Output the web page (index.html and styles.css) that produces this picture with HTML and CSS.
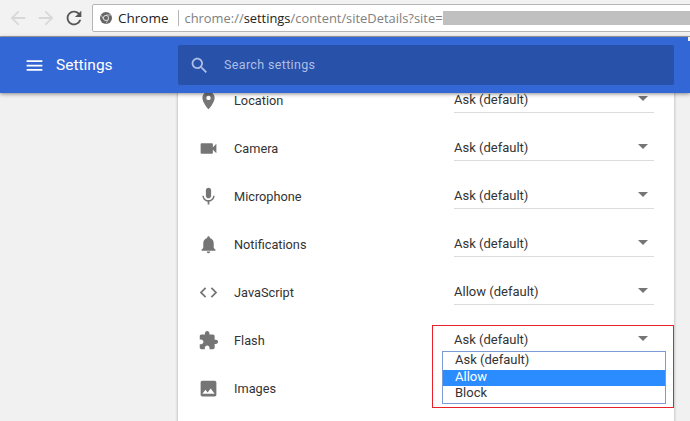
FILE: index.html
```html
<!DOCTYPE html>
<html lang="en">
<head>
<meta charset="utf-8">
<title>Settings</title>
<link rel="stylesheet" href="styles.css">
</head>
<body>
<div class="toolbar">
  <svg class="nav nav-off" viewBox="0 0 24 24"><path d="M20 11H7.83l5.59-5.59L12 4l-8 8 8 8 1.41-1.41L7.83 13H20v-2z"/></svg>
  <svg class="nav nav-off" viewBox="0 0 24 24"><path d="M12 4l-1.41 1.41L16.17 11H4v2h12.17l-5.58 5.59L12 20l8-8z"/></svg>
  <svg class="nav nav-on" viewBox="0 0 24 24"><path d="M17.65 6.35C16.2 4.9 14.21 4 12 4c-4.42 0-7.99 3.58-7.99 8s3.57 8 7.99 8c3.73 0 6.84-2.55 7.73-6h-2.08c-.82 2.33-3.04 4-5.65 4-3.31 0-6-2.69-6-6s2.69-6 6-6c1.66 0 3.14.69 4.22 1.78L13 11h7V4l-2.35 2.35z"/></svg>
  <div class="omnibox">
    <svg class="chrome-logo" viewBox="0 0 12 12"><circle cx="6" cy="6" r="6" fill="#666"/><circle cx="6" cy="6" r="2.6" fill="#666" stroke="#ddd" stroke-width="1"/><path d="M6 3h5M3.6 7.4L1.2 3.2M8.4 7.4L6 11.6" stroke="#ddd" stroke-width=".7" fill="none"/></svg>
    <span class="origin">Chrome</span>
    <span class="divider"></span>
    <span class="url"><span class="url-dim">chrome://</span><span class="url-strong">settings</span><span class="url-dim">/content/siteDetails?site=</span></span>
    <span class="redacted"></span>
  </div>
</div>
<header class="app-header">
  <div class="brand">
    <svg class="menu-icon" viewBox="0 0 24 24"><path d="M3 18h18v-2H3v2zm0-5h18v-2H3v2zm0-7v2h18V6H3z"/></svg>
    <span class="brand-title">Settings</span>
  </div>
  <div class="search">
    <svg class="search-icon" viewBox="0 0 24 24"><path d="M15.5 14h-.79l-.28-.27C15.41 12.59 16 11.11 16 9.5 16 5.91 13.09 3 9.5 3S3 5.91 3 9.5 5.91 16 9.5 16c1.61 0 3.09-.59 4.23-1.57l.27.28v.79l5 4.99L20.49 19l-4.99-5zm-6 0C7.01 14 5 11.99 5 9.5S7.01 5 9.5 5 14 7.01 14 9.5 11.99 14 9.5 14z"/></svg>
    <span class="search-text">Search settings</span>
  </div>
</header>
<main class="page">
  <section class="card">
    <div class="row">
      <svg class="row-icon" viewBox="0 0 24 24"><path d="M12 2C8.13 2 5 5.13 5 9c0 5.25 7 13 7 13s7-7.75 7-13c0-3.87-3.13-7-7-7zm0 9.5a2.5 2.5 0 0 1 0-5 2.5 2.5 0 0 1 0 5z"/></svg>
      <span class="row-label">Location</span>
      <div class="select"><span>Ask (default)</span><i class="caret"></i></div>
    </div>
    <div class="row">
      <svg class="row-icon" viewBox="0 0 24 24"><path d="M17 10.5V7c0-.55-.45-1-1-1H4c-.55 0-1 .45-1 1v10c0 .55.45 1 1 1h12c.55 0 1-.45 1-1v-3.5l4 4v-11l-4 4z"/></svg>
      <span class="row-label">Camera</span>
      <div class="select"><span>Ask (default)</span><i class="caret"></i></div>
    </div>
    <div class="row">
      <svg class="row-icon" viewBox="0 0 24 24"><path d="M12 14c1.66 0 2.99-1.34 2.99-3L15 5c0-1.66-1.34-3-3-3S9 3.34 9 5v6c0 1.66 1.34 3 3 3zm5.3-3c0 3-2.54 5.1-5.3 5.1S6.7 14 6.7 11H5c0 3.41 2.72 6.23 6 6.72V21h2v-3.28c3.28-.48 6-3.3 6-6.72h-1.7z"/></svg>
      <span class="row-label">Microphone</span>
      <div class="select"><span>Ask (default)</span><i class="caret"></i></div>
    </div>
    <div class="row">
      <svg class="row-icon" viewBox="0 0 24 24"><path d="M12 22c1.1 0 2-.9 2-2h-4c0 1.1.9 2 2 2zm6-6v-5c0-3.07-1.63-5.64-4.5-6.32V4c0-.83-.67-1.5-1.5-1.5s-1.5.67-1.5 1.5v.68C7.64 5.36 6 7.92 6 11v5l-2 2v1h16v-1l-2-2z"/></svg>
      <span class="row-label">Notifications</span>
      <div class="select"><span>Ask (default)</span><i class="caret"></i></div>
    </div>
    <div class="row">
      <svg class="row-icon" viewBox="0 0 24 24"><path d="M9.4 16.6L4.8 12l4.6-4.6L8 6l-6 6 6 6 1.4-1.4zm5.2 0l4.6-4.6-4.6-4.6L16 6l6 6-6 6-1.4-1.4z"/></svg>
      <span class="row-label">JavaScript</span>
      <div class="select"><span>Allow (default)</span><i class="caret"></i></div>
    </div>
    <div class="row">
      <svg class="row-icon" viewBox="0 0 24 24"><path d="M20.5 11H19V7c0-1.1-.9-2-2-2h-4V3.5C13 2.12 11.88 1 10.5 1S8 2.12 8 3.5V5H4c-1.1 0-1.99.9-1.99 2v3.8H3.5c1.49 0 2.7 1.21 2.7 2.7s-1.21 2.7-2.7 2.7H2V20c0 1.1.9 2 2 2h3.8v-1.5c0-1.49 1.21-2.7 2.7-2.7 1.49 0 2.7 1.21 2.7 2.7V22H17c1.1 0 2-.9 2-2v-4h1.5c1.38 0 2.5-1.12 2.5-2.5S21.88 11 20.5 11z"/></svg>
      <span class="row-label">Flash</span>
      <div class="select select-open"><span>Ask (default)</span><i class="caret"></i></div>
    </div>
    <div class="row">
      <svg class="row-icon" viewBox="0 0 24 24"><path d="M21 19V5c0-1.1-.9-2-2-2H5c-1.1 0-2 .9-2 2v14c0 1.1.9 2 2 2h14c1.1 0 2-.9 2-2zM8.5 13.5l2.5 3.01L14.5 12l4.5 6H5l3.5-4.5z"/></svg>
      <span class="row-label">Images</span>
    </div>
  </section>
</main>
<ul class="dropdown">
  <li>Ask (default)</li>
  <li class="picked">Allow</li>
  <li>Block</li>
</ul>
<div class="annotation"></div>
</body>
</html>
```
FILE: styles.css
```css
* { box-sizing: border-box; }
html, body { margin: 0; height: 100%; overflow: hidden; }
body {
  display: flex;
  flex-direction: column;
  background: #f1f1f1;
  font-family: Roboto, "Liberation Sans", sans-serif;
  font-size: 13px;
  color: #333;
  position: relative;
}
.toolbar {
  flex: none;
  height: 37px;
  display: flex;
  align-items: center;
  gap: 6px;
  padding: 0 0 1px 7px;
  background: #f2f2f2;
  border-bottom: 1px solid #a3a3a3;
}
.nav { width: 22px; height: 22px; flex: none; }
.nav-off { fill: #d8d8d8; }
.nav-on { fill: #555; }
.omnibox {
  flex: 1;
  height: 28px;
  margin: 0 -4px 0 1px;
  display: flex;
  align-items: center;
  background: #fff;
  border: 1px solid #b5b5b5;
  border-radius: 2px;
  padding-left: 7px;
  font-family: "Open Sans", sans-serif;
  font-size: 13.5px;
}
.chrome-logo { width: 12px; height: 12px; flex: none; }
.origin { margin-left: 6px; color: #222; }
.divider { width: 1px; height: 16px; background: #b5b5b5; margin: 0 6px 0 9px; }
.url { white-space: nowrap; font-size: 12.9px; }
.url-dim { color: #808080; }
.url-strong { color: #222; }
.redacted { flex: 1; height: 14px; background: #c0c0c0; margin-right: 1px; }
.app-header {
  flex: none;
  height: 56px;
  display: flex;
  align-items: center;
  background: #3367d6;
  box-shadow: 0 1px 4px rgba(0,0,0,.45);
  position: relative;
  z-index: 2;
}
.app-header::after {
  content: "";
  position: absolute;
  right: 0;
  top: 0;
  width: 2px;
  height: 4px;
  background: #f2f2f2;
}
.brand { width: 178px; display: flex; align-items: center; padding-left: 24px; color: #fff; }
.menu-icon { width: 21px; height: 21px; fill: #fff; flex: none; }
.brand-title { margin-left: 11px; font-size: 15.5px; }
.search {
  width: 496px;
  height: 40px;
  display: flex;
  align-items: center;
  padding-left: 11px;
  background: #2851a9;
  border-radius: 2px;
}
.search-icon { width: 21px; height: 21px; fill: #aebfe6; flex: none; }
.search-text { margin: -1px 0 0 14px; color: #aebfe6; font-size: 12.5px; letter-spacing: .35px; }
.page { flex: 1; min-height: 0; overflow: hidden; padding-left: 178px; }
.card {
  width: 496px;
  height: 400px;
  margin-top: -17px;
  background: #fff;
  box-shadow: 0 0 3px rgba(0,0,0,.3);
  padding: 0;
}
.row {
  height: 48px;
  display: flex;
  align-items: center;
  padding-left: 20px;
}
.row-icon { width: 21px; height: 21px; fill: #757575; flex: none; }
.row-label { width: 220px; margin-left: 15px; font-size: 12.75px; }
.select {
  width: 200px;
  height: 25px;
  display: flex;
  align-items: center;
  justify-content: space-between;
  padding: 1px 6px 2px 0;
  border-bottom: 1px solid #dcdcdc;
}
.select-open { border-bottom-color: #5a7fc7; }
.caret {
  width: 0;
  height: 0;
  margin-bottom: 1px;
  border-left: 5px solid transparent;
  border-right: 5px solid transparent;
  border-top: 5px solid #757575;
}
.dropdown {
  position: absolute;
  left: 442px;
  top: 351px;
  width: 224px;
  height: 53px;
  margin: 0;
  padding: 1px 0;
  list-style: none;
  background: #fff;
  border: 1px solid #7c9bd6;
  z-index: 3;
}
.dropdown li { height: 16.6px; line-height: 14px; padding-left: 12px; color: #333; }
.dropdown .picked { background: #2b8cff; color: #fff; }
.annotation {
  position: absolute;
  left: 432px;
  top: 325px;
  width: 242px;
  height: 83px;
  border: 1px solid #e8202a;
  z-index: 4;
  pointer-events: none;
}
```
